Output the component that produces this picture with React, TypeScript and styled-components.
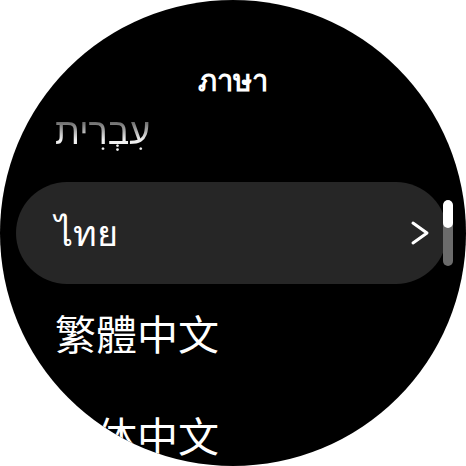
import React from 'react'
import styled, {createGlobalStyle} from 'styled-components'

const GlobalStyle = createGlobalStyle`
  html, body {
    margin: 0;
    padding: 0;
    background: #fff;
  }
  body {
    font-family: 'Noto Sans', 'Noto Sans CJK SC', sans-serif;
  }
`

const Screen = styled.div`
  position: relative;
  width: 466px;
  height: 466px;
  border-radius: 50%;
  background: #000;
  overflow: hidden;
  color: #fff;
`

const Title = styled.div`
  position: absolute;
  top: 60px;
  left: 0;
  right: 0;
  text-align: center;
  font-size: 29px;
  font-weight: 700;
  line-height: 40px;
  z-index: 2;
`

const List = styled.ul`
  list-style: none;
  margin: 0;
  padding: 80px 19px 0 16px;
  display: flex;
  flex-direction: column;
`

const Row = styled.li<{selected?: boolean}>`
  display: flex;
  align-items: center;
  justify-content: space-between;
  height: 102px;
  padding: 0 17px 0 39px;
  border-radius: 51px;
  background: ${(p) => (p.selected ? '#262626' : 'transparent')};
`

const Label = styled.span<{fade?: boolean; lang?: string}>`
  font-size: ${(p) => (p.lang?.startsWith('zh') ? '41px' : '36px')};
  font-family: ${(p) =>
    p.lang === 'zh-TW'
      ? "'Noto Sans', 'Noto Sans CJK TC', sans-serif"
      : "'Noto Sans', 'Noto Sans CJK SC', sans-serif"};
  line-height: 1.2;
  white-space: nowrap;
  ${(p) =>
    p.fade &&
    `
  background: linear-gradient(to bottom, #5a5a5a 25%, #f0f0f0 70%);
  -webkit-background-clip: text;
  background-clip: text;
  color: transparent;
`}
`

const Chevron = styled.svg`
  width: 20px;
  height: 26px;
  flex-shrink: 0;
`

const ScrollTrack = styled.div`
  position: absolute;
  left: 443px;
  top: 200px;
  width: 10px;
  height: 66px;
  border-radius: 5px;
  background: #6b6b6b;
  overflow: hidden;
`

const ScrollThumb = styled.div`
  width: 100%;
  height: 28px;
  border-radius: 5px;
  background: #fff;
`

const languages = [
  {id: 'he', text: 'עִבְרִית', fade: true},
  {id: 'th', text: 'ไทย', selected: true},
  {id: 'zh-TW', text: '繁體中文'},
  {id: 'zh-CN', text: '简体中文'},
]

export default function App() {
  return (
    <>
      <GlobalStyle />
      <Screen>
        <Title>ภาษา</Title>
        <List>
          {languages.map((l) => (
            <Row key={l.id} selected={l.selected}>
              <Label lang={l.id} dir="auto" fade={l.fade}>
                {l.text}
              </Label>
              {l.selected && (
                <Chevron viewBox="0 0 20 26">
                  <path
                    d="M3 3 L17 13 L3 23"
                    fill="none"
                    stroke="#fff"
                    strokeWidth="3"
                    strokeLinecap="round"
                    strokeLinejoin="round"
                  />
                </Chevron>
              )}
            </Row>
          ))}
        </List>
        <ScrollTrack>
          <ScrollThumb />
        </ScrollTrack>
      </Screen>
    </>
  )
}
